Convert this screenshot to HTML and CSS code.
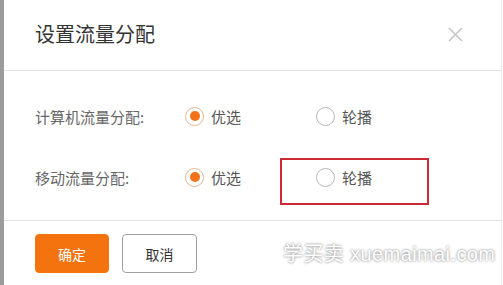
FILE: index.html
```html
<!DOCTYPE html>
<html lang="zh-CN">
<head>
<meta charset="utf-8">
<title>设置流量分配</title>
<link rel="stylesheet" href="styles.css">
</head>
<body>
<div class="page">
  <div class="edge"></div>
  <div class="dialog">
    <div class="header">
      <h1 class="title">设置流量分配</h1>
      <span class="close" aria-label="关闭">
        <svg width="15" height="15" viewBox="0 0 15 15"><path d="M1 1L14 14M14 1L1 14" stroke="#c4c4c4" stroke-width="1.6" fill="none"/></svg>
      </span>
    </div>
    <div class="body">
      <div class="row">
        <span class="label">计算机流量分配:</span>
        <label class="option"><span class="radio checked"></span><span>优选</span></label>
        <label class="option"><span class="radio"></span><span>轮播</span></label>
      </div>
      <div class="row">
        <span class="label">移动流量分配:</span>
        <label class="option"><span class="radio checked"></span><span>优选</span></label>
        <label class="option"><span class="radio"></span><span>轮播</span></label>
        <span class="highlight"></span>
      </div>
    </div>
    <div class="footer">
      <button class="btn primary">确定</button>
      <button class="btn">取消</button>
      <span class="watermark">学买卖 xuemaimai.com</span>
    </div>
  </div>
</div>
</body>
</html>
```

FILE: styles.css
```css
html, body {
  margin: 0;
  padding: 0;
  background: #ffffff;
}
body {
  font-family: "Noto Sans CJK SC", "Noto Sans", sans-serif;
  color: #333;
}
.page {
  display: flex;
  width: 503px;
  height: 285px;
  overflow: hidden;
}
.edge {
  width: 4px;
  flex: none;
  background: #9c9c9c;
}
.dialog {
  width: 497px;
  flex: none;
  display: flex;
  flex-direction: column;
  border-right: 1px solid #ececec;
  background: #fff;
}
.header {
  height: 71px;
  box-sizing: border-box;
  border-bottom: 1px solid #e3e3e3;
  display: flex;
  align-items: center;
  justify-content: space-between;
  padding: 0 38px 2px 31px;
}
.title {
  margin: 0;
  font-size: 20px;
  font-weight: normal;
  color: #333;
  line-height: 28px;
}
.close {
  display: flex;
  width: 15px;
  height: 15px;
}
.body {
  padding: 25px 0 23px 31px;
  display: flex;
  flex-direction: column;
  gap: 21px;
  border-bottom: 1px solid #e3e3e3;
}
.row {
  position: relative;
  display: flex;
  align-items: center;
  height: 40px;
  font-size: 15px;
  color: #666;
}
.label {
  width: 150px;
  flex: none;
}
.option {
  width: 131px;
  display: flex;
  align-items: center;
  gap: 7px;
  color: #555;
}
.radio {
  width: 19px;
  height: 19px;
  box-sizing: border-box;
  border: 1px solid #b8b8b8;
  border-radius: 50%;
  display: flex;
  align-items: center;
  justify-content: center;
  background: #fff;
}
.radio.checked {
  border-color: #e4b894;
}
.radio.checked::after {
  content: "";
  width: 10px;
  height: 10px;
  border-radius: 50%;
  background: #f2721c;
}
.highlight {
  position: absolute;
  left: 245px;
  top: 1px;
  width: 149px;
  height: 47px;
  box-sizing: border-box;
  border: 2px solid #cc2a35;
}
.footer {
  position: relative;
  flex: 1;
  display: flex;
  align-items: flex-start;
  gap: 13px;
  padding: 13px 0 0 31px;
}
.btn {
  width: 75px;
  height: 39px;
  box-sizing: border-box;
  border: 1px solid #a0a0a0;
  border-radius: 4px;
  background: #fff;
  font-family: inherit;
  font-size: 14px;
  color: #333;
  padding: 0;
}
.btn.primary {
  width: 74px;
  border-color: #f5730f;
  background: #f5730f;
  color: #fff;
}
.watermark {
  position: absolute;
  left: 279px;
  top: 20px;
  white-space: nowrap;
  font-family: "Liberation Sans", "Noto Sans CJK SC", sans-serif;
  font-size: 20px;
  line-height: 26px;
  color: #fff;
  letter-spacing: 0.4px;
  text-shadow: 0 0 3px #9a9a9a, 0 0 2px #b0b0b0;
}
```
